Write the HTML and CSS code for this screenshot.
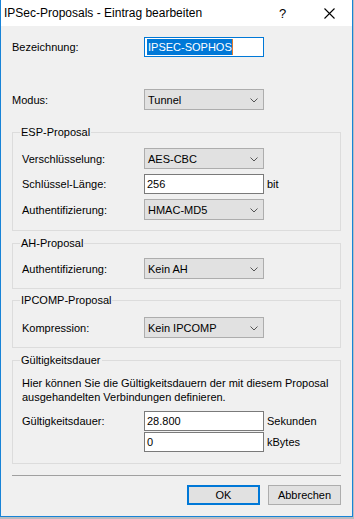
FILE: index.html
```html
<!DOCTYPE html>
<html lang="de">
<head>
<meta charset="utf-8">
<title>IPSec-Proposals - Eintrag bearbeiten</title>
<link rel="stylesheet" href="styles.css">
</head>
<body>
<div class="window">
  <div class="titlebar">
    <span class="title">IPSec-Proposals - Eintrag bearbeiten</span>
    <span class="help">?</span>
    <span class="close"><svg width="11" height="11" viewBox="0 0 11 11"><path d="M0.5 0.5 L10.5 10.5 M10.5 0.5 L0.5 10.5" stroke="#000" stroke-width="1.1" fill="none"/></svg></span>
  </div>
  <div class="content">
    <div class="row first">
      <label class="lbl outer">Bezeichnung:</label>
      <div class="input focused"><span class="sel">IPSEC-SOPHOS</span><span class="caret"></span></div>
    </div>
    <div class="row modus">
      <label class="lbl outer">Modus:</label>
      <div class="combo"><span>Tunnel</span><svg class="chev" width="8" height="5" viewBox="0 0 8 5"><path d="M0.5 0.5 L4 4 L7.5 0.5" stroke="#555" stroke-width="1" fill="none"/></svg></div>
    </div>

    <fieldset class="group esp">
      <legend>ESP-Proposal</legend>
      <div class="row">
        <label class="lbl">Verschlüsselung:</label>
        <div class="combo"><span>AES-CBC</span><svg class="chev" width="8" height="5" viewBox="0 0 8 5"><path d="M0.5 0.5 L4 4 L7.5 0.5" stroke="#555" stroke-width="1" fill="none"/></svg></div>
      </div>
      <div class="row gap5">
        <label class="lbl">Schlüssel-Länge:</label>
        <div class="input">256</div>
        <span class="unit">bit</span>
      </div>
      <div class="row gap5">
        <label class="lbl">Authentifizierung:</label>
        <div class="combo"><span>HMAC-MD5</span><svg class="chev" width="8" height="5" viewBox="0 0 8 5"><path d="M0.5 0.5 L4 4 L7.5 0.5" stroke="#555" stroke-width="1" fill="none"/></svg></div>
      </div>
    </fieldset>

    <fieldset class="group ah">
      <legend>AH-Proposal</legend>
      <div class="row">
        <label class="lbl">Authentifizierung:</label>
        <div class="combo"><span>Kein AH</span><svg class="chev" width="8" height="5" viewBox="0 0 8 5"><path d="M0.5 0.5 L4 4 L7.5 0.5" stroke="#555" stroke-width="1" fill="none"/></svg></div>
      </div>
    </fieldset>

    <fieldset class="group ipcomp">
      <legend>IPCOMP-Proposal</legend>
      <div class="row">
        <label class="lbl">Kompression:</label>
        <div class="combo"><span>Kein IPCOMP</span><svg class="chev" width="8" height="5" viewBox="0 0 8 5"><path d="M0.5 0.5 L4 4 L7.5 0.5" stroke="#555" stroke-width="1" fill="none"/></svg></div>
      </div>
    </fieldset>

    <fieldset class="group life">
      <legend>Gültigkeitsdauer</legend>
      <p class="desc">Hier können Sie die Gültigkeitsdauern der mit diesem Proposal ausgehandelten Verbindungen definieren.</p>
      <div class="lifegrid">
        <label class="lbl">Gültigkeitsdauer:</label>
        <div class="input">28.800</div>
        <span class="unit">Sekunden</span>
        <span></span>
        <div class="input">0</div>
        <span class="unit">kBytes</span>
      </div>
    </fieldset>

    <div class="separator"></div>

    <div class="buttons">
      <button class="btn default">OK</button>
      <button class="btn">Abbrechen</button>
    </div>
  </div>
</div>
</body>
</html>
```

FILE: styles.css
```css
* { box-sizing: border-box; }
html, body { margin: 0; padding: 0; }
body {
  width: 354px;
  height: 519px;
  background: #b9bcc0;
  font-family: "Liberation Sans", Arial, sans-serif;
  font-size: 11px;
  color: #000;
  overflow: hidden;
}
.window {
  width: 353px;
  height: 517px;
  border: 1px solid #1883d7;
  border-top: none;
  display: flex;
  flex-direction: column;
  background: #f0f0f0;
}
.titlebar {
  height: 26px;
  flex: 0 0 26px;
  background: #fff;
  display: flex;
  align-items: center;
  padding-left: 3px;
  font-size: 12px;
}
.title { flex: 1; }
.help { width: 12px; margin-right: 33px; font-size: 13px; }
.close { width: 11px; height: 11px; margin-right: 17px; display: flex; margin-top: 1px; }
.content {
  flex: 1;
  padding: 11px 11px 0 11px;
  display: flex;
  flex-direction: column;
}
.row {
  display: flex;
  align-items: center;
}
.row.modus { margin-top: 32px; }
.row.gap5 { margin-top: 5px; }
.lbl {
  width: 122px;
  flex: 0 0 122px;
  line-height: 14px;
}
.lbl.outer { width: 132px; flex-basis: 132px; }
.input {
  width: 120px;
  height: 20px;
  border: 1px solid #7a7a7a;
  background: #fff;
  padding-left: 2px;
  line-height: 18px;
  display: flex;
  align-items: center;
}
.input.focused { border-color: #0078d7; }
.sel {
  background: #0078d7;
  color: #fff;
  line-height: 16px;
  padding-left: 1px;
}
.caret {
  width: 1px;
  height: 16px;
  background: #e07a2a;
}
.combo {
  width: 120px;
  height: 21px;
  border: 1px solid #adadad;
  background: #e1e1e1;
  padding: 0 5px 0 3px;
  display: flex;
  align-items: center;
  justify-content: space-between;
}
.chev { display: block; margin-top: 1px; }
.unit { margin-left: 3px; line-height: 14px; }
.group {
  margin: 0;
  border: 1px solid #dcdcdc;
  padding: 0 9px 0 9px;
  min-width: 0;
}
.group legend {
  padding: 0 1px;
  margin-left: -2px;
  line-height: 14px;
  font-size: 11px;
}
.group.esp { margin-top: 15px; padding-top: 9px; padding-bottom: 10px; }
.group.ah { margin-top: 5px; padding-top: 8px; padding-bottom: 9px; }
.group.ipcomp { margin-top: 4px; padding-top: 10px; padding-bottom: 9px; }
.group.life { margin-top: 5px; padding-top: 9px; padding-bottom: 11px; }
.desc {
  margin: 0;
  line-height: 14px;
}
.lifegrid {
  margin-top: 7px;
  display: grid;
  grid-template-columns: 122px 120px auto;
  row-gap: 1px;
  align-items: center;
}
.separator {
  margin-top: 11px;
  height: 1px;
  background: #a0a0a0;
  margin-right: 0;
}
.buttons {
  margin-top: 9px;
  display: flex;
  justify-content: flex-end;
  gap: 8px;
}
.btn {
  width: 73px;
  height: 20px;
  border: 1px solid #adadad;
  background: #e1e1e1;
  font-family: "Liberation Sans", Arial, sans-serif;
  font-size: 11px;
  color: #000;
  padding: 0;
  margin: 0;
}
.btn.default { border: 2px solid #0078d7; }
```
